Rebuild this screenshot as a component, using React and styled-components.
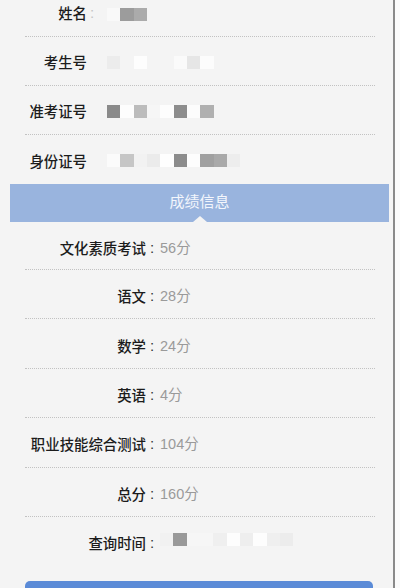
import React from "react";
import styled, { createGlobalStyle } from "styled-components";

const Global = createGlobalStyle`
  html, body { margin: 0; padding: 0; background: #fbfbfb; overflow: hidden; }
  body { font-family: "Noto Sans CJK SC", "Noto Sans", sans-serif; }
`;

const Page = styled.div`
  width: 393px;
  height: 588px;
  background: #f4f4f4;
  border-right: 2px solid #8a8a8a;
  overflow: hidden;
  display: flex;
  flex-direction: column;
`;

const List = styled.div`
  margin: ${(p) => (p.$top ? "-12px" : "0")} 18px 0 25px;
  display: flex;
  flex-direction: column;
`;

const Row = styled.div`
  height: ${(p) => p.$h}px;
  flex: none;
  box-sizing: border-box;
  display: flex;
  align-items: center;
  padding-top: ${(p) => p.$pt || 0}px;
  border-bottom: ${(p) => (p.$last ? "none" : "1px dotted #c2c2c2")};
`;

const Label = styled.div`
  width: ${(p) => p.$w}px;
  flex: none;
  text-align: right;
  font-size: 14.4px;
  font-weight: 500;
  color: #1c1c1c;
  white-space: nowrap;
  line-height: 20px;
`;

const Colon = styled.span`
  flex: none;
  width: ${(p) => p.$w}px;
  padding-left: ${(p) => p.$pl}px;
  box-sizing: border-box;
  font-family: "Liberation Sans", sans-serif;
  font-size: 15px;
  color: ${(p) => (p.$faint ? "#c4c4c4" : "#333")};
  line-height: 20px;
`;

const Value = styled.div`
  font-family: "Liberation Sans", "Noto Sans CJK SC", sans-serif;
  font-size: 14.5px;
  color: #9a9a9a;
  line-height: 20px;
  white-space: nowrap;
`;

const Mosaic = styled.div`
  display: flex;
  margin-left: ${(p) => p.$ml}px;
  margin-top: ${(p) => p.$mt}px;
`;

const Cell = styled.div`
  width: 13.33px;
  height: 13px;
  flex: none;
  background: ${(p) => p.$c};
`;

const Banner = styled.div`
  margin: 0 4px 0 10px;
  height: 38px;
  flex: none;
  box-sizing: border-box;
  padding-bottom: 5px;
  background: #99b4de;
  color: #f3f6fc;
  font-size: 15px;
  display: flex;
  align-items: center;
  justify-content: center;
  position: relative;
  &::after {
    content: "";
    position: absolute;
    bottom: 0;
    left: 50%;
    margin-left: -7px;
    border-left: 7px solid transparent;
    border-right: 7px solid transparent;
    border-bottom: 6px solid #f4f4f4;
  }
`;

const Button = styled.div`
  margin: 15px 20px 0 25px;
  height: 40px;
  flex: none;
  background: #5b8bd7;
  border-radius: 5px;
`;

const info = [
  { label: "姓名", faintColon: true, cells: ["#f9f9f9", "#9c9c9c", "#ababab"], mt: 3 },
  { label: "考生号", cells: ["#ececec", "#f4f4f4", "#fdfdfd", "#f4f4f4", "#f4f4f4", "#fafafa", "#e6e6e6", "#fcfcfc"], mt: 0 },
  { label: "准考证号", cells: ["#8a8a8a", "#fdfdfd", "#bcbcbc", "#f6f6f6", "#fdfdfd", "#8d8d8d", "#fcfcfc", "#b0b0b0"], mt: 0 },
  { label: "身份证号", cells: ["#fbfbfb", "#c6c6c6", "#f2f2f2", "#ebebeb", "#fefefe", "#8c8c8c", "#fdfdfd", "#a0a0a0", "#a9a9a9", "#ededed"], mt: 0 },
];

const scores = [
  { label: "文化素质考试", value: "56分", h: 48 },
  { label: "语文", value: "28分", h: 49.4 },
  { label: "数学", value: "24分", h: 49.4 },
  { label: "英语", value: "4分", h: 49.4 },
  { label: "职业技能综合测试", value: "104分", h: 49.4 },
  { label: "总分", value: "160分", h: 49.4 },
];

const timeCells = ["#f1f1f1", "#999999", "#f6f6f6", "#f6f6f6", "#efefef", "#fdfdfd", "#eeeeee", "#fdfdfd", "#efefef", "#ececec"];

export default function App() {
  return (
    <>
      <Global />
      <Page>
        <List $top>
          {info.map((r, i) => (
            <Row key={r.label} $h={49} $pt={2} $last={i === info.length - 1}>
              <Label $w={62}>{r.label}</Label>
              {r.faintColon ? <Colon $w={20} $pl={3} $faint>:</Colon> : <Colon $w={20} $pl={3} />}
              <Mosaic $ml={0} $mt={r.mt}>
                {r.cells.map((c, j) => (
                  <Cell key={j} $c={c} />
                ))}
              </Mosaic>
            </Row>
          ))}
        </List>
        <Banner>成绩信息</Banner>
        <List>
          {scores.map((s) => (
            <Row key={s.label} $h={s.h} $pt={4}>
              <Label $w={121}>{s.label}</Label>
              <Colon $w={14} $pl={4}>:</Colon>
              <Value>{s.value}</Value>
            </Row>
          ))}
          <Row $h={49} $pt={4} $last>
            <Label $w={121}>查询时间</Label>
            <Colon $w={14} $pl={4}>:</Colon>
            <Mosaic $ml={0} $mt={-8}>
              {timeCells.map((c, j) => (
                <Cell key={j} $c={c} />
              ))}
            </Mosaic>
          </Row>
        </List>
        <Button />
      </Page>
    </>
  );
}
